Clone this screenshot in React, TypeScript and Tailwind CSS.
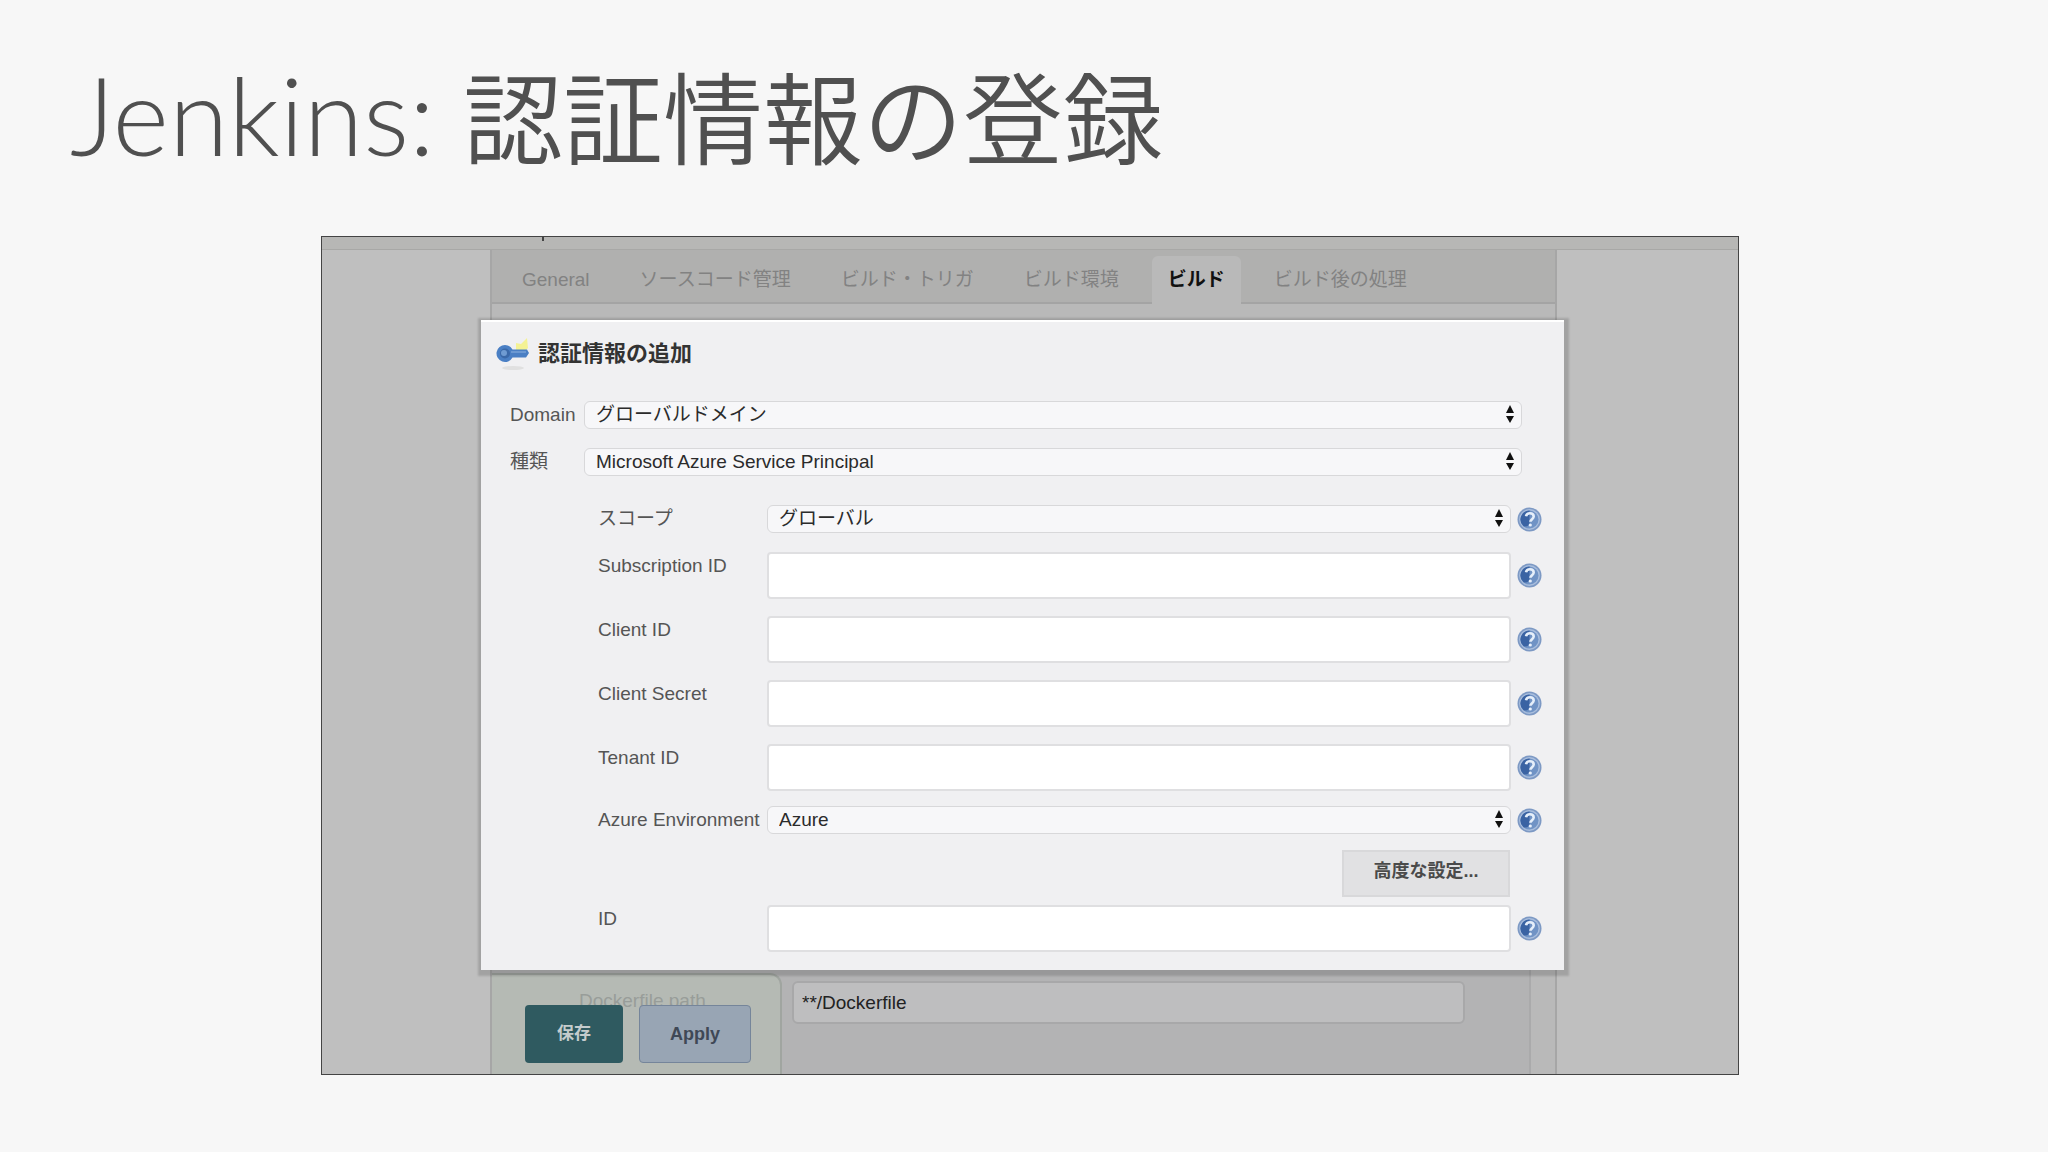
import { useState } from "react";
import type { ReactNode } from "react";
import { clsx } from "clsx";

const FONT = "font-['Liberation_Sans','Noto_Sans_CJK_JP',sans-serif]";

const TABS = [
  { id: "general", label: "General" },
  { id: "scm", label: "ソースコード管理" },
  { id: "trigger", label: "ビルド・トリガ" },
  { id: "env", label: "ビルド環境" },
  { id: "build", label: "ビルド" },
  { id: "post", label: "ビルド後の処理" },
];

const TEXT_FIELDS = [
  { id: "subscription", label: "Subscription ID", type: "text" },
  { id: "client", label: "Client ID", type: "text" },
  { id: "secret", label: "Client Secret", type: "password" },
  { id: "tenant", label: "Tenant ID", type: "text" },
];

function KeyIcon() {
  return (
    <svg width="34" height="36" viewBox="0 0 34 36" className="shrink-0" aria-hidden="true">
      <ellipse cx="17" cy="33" rx="11" ry="2" fill="#e0e0e0" />
      <path d="M20 8l5 1 6-6 1 10-4 4H20z" fill="#f4f294" />
      <path
        d="M9 10a8.500 8.500 0 0 1 7.500 4.500H31l2 3.500-3 4.500H16.500A8.500 8.500 0 1 1 9 10z"
        fill="#4a7fc4"
      />
      <path d="M15 17h15" stroke="#6b98d2" strokeWidth="2" />
      <circle cx="9" cy="18.500" r="5" fill="#3a68a8" />
      <circle cx="8" cy="18" r="3" fill="#6f9bd2" />
    </svg>
  );
}

function HelpIcon() {
  return (
    <svg width="25" height="25" viewBox="0 0 25 25" aria-hidden="true">
      <circle cx="12.5" cy="12.5" r="12" fill="#7d99c4" />
      <circle cx="12.5" cy="12.5" r="10.4" fill="#a9bedd" />
      <circle cx="12.5" cy="12.5" r="9" fill="#7093c5" />
      <path d="M12.5 3.5a9 9 0 0 0-6 15.700c4 1 6-1 6-4z" fill="#3a63a3" />
      <path
        d="M9 9.300c.4-2 2-3 3.900-3 2.200 0 3.800 1.200 3.800 3.200 0 2.600-3.300 2.700-3.300 5.300"
        fill="none"
        stroke="#e6effa"
        strokeWidth="2.600"
      />
      <circle cx="13.300" cy="18" r="1.600" fill="#e6effa" />
    </svg>
  );
}

function HelpButton({ label }: { label: string }) {
  return (
    <button type="button" aria-label={`${label} のヘルプ`} className="rounded-full">
      <HelpIcon />
    </button>
  );
}

function Select({ id, options }: { id: string; options: string[] }) {
  return (
    <div className="relative">
      <select
        id={id}
        className="block h-7 w-full appearance-none rounded-md border border-[#d8d8da] bg-[#f7f7f9] pl-[11px] pr-8 text-[19px] leading-6 text-[#2b2b2b]"
      >
        {options.map((option) => (
          <option key={option}>{option}</option>
        ))}
      </select>
      <svg
        width="8"
        height="18"
        viewBox="0 0 8 18"
        className="pointer-events-none absolute right-2 top-1"
        aria-hidden="true"
      >
        <path d="M4 0l4 8H0zM4 18l4-7H0z" fill="#111" />
      </svg>
    </div>
  );
}

function Field({
  id,
  label,
  center,
  children,
}: {
  id: string;
  label: string;
  center?: boolean;
  children: ReactNode;
}) {
  return (
    <div className="grid grid-cols-[163px_1fr_25px] gap-x-1.5">
      <label htmlFor={id} className="whitespace-nowrap leading-7">
        {label}
      </label>
      {children}
      <div className={clsx("flex", center ? "items-center" : "items-start pt-0.5")}>
        <HelpButton label={label} />
      </div>
    </div>
  );
}

function TextInput({ id, type = "text" }: { id: string; type?: string }) {
  return (
    <input
      id={id}
      type={type}
      className="h-[47px] w-full rounded-sm border-2 border-[#dfdfe1] bg-white px-2 text-[19px]"
    />
  );
}

function ConfigPage() {
  const [active, setActive] = useState("build");

  return (
    <div className="flex flex-col [grid-area:1/1]">
      <div className="relative h-[13px] border-b border-[#a8a8a6] bg-[#b7b7b5]">
        <span className="absolute left-[220px] top-0 h-1 w-0.5 bg-[#444]" />
      </div>
      <div className="flex flex-1 bg-[#bfbfbf]">
        <div className="w-[168px] shrink-0" />
        <div className="relative flex flex-1 flex-col border-x-2 border-[#a6a6a6] bg-[#b9b9b9]">
          <nav className="flex h-[54px] items-end border-b-2 border-[#a4a4a4] bg-[#b0b0af] pl-[5px]">
            {TABS.map((tab) => (
              <button
                key={tab.id}
                type="button"
                onClick={() => setActive(tab.id)}
                className={clsx(
                  "-mb-0.5 h-12 whitespace-nowrap text-[19px]",
                  active === tab.id
                    ? "mx-2 rounded-t-md bg-[#b9b9b9] px-4 font-bold text-[#111]"
                    : "px-[25px] text-[#828282]"
                )}
              >
                {tab.label}
              </button>
            ))}
          </nav>
          <div className="mr-6 mt-auto border-r-2 border-[#aaaaab] bg-[#b3b3b4] pb-[50px] pl-[300px] pr-16 pt-10">
            <input
              id="dockerfile"
              aria-label="Dockerfile path"
              defaultValue="**/Dockerfile"
              className="block h-[43px] w-full rounded-md border-2 border-[#a8a8a9] bg-[#bebebf] px-2 text-[19px] text-[#222]"
            />
          </div>

          {/* sticky save bar */}
          <div className="absolute bottom-0 left-0 h-[101px] w-[290px] rounded-tr-xl border-r-2 border-t-2 border-[#a0a5a0] bg-[#b5bab4] pl-[33px] pt-3">
            <label htmlFor="dockerfile" className="block pl-[54px] text-[19px] leading-7 text-[#989d99]">
              Dockerfile path
            </label>
            <div className="relative -mt-2.5 flex gap-4">
              <button
                type="button"
                className="h-[58px] w-[98px] rounded bg-[#2f5a60] text-[17px] font-bold text-[#c5cccd]"
              >
                保存
              </button>
              <button
                type="button"
                className="h-[58px] w-[112px] rounded border border-[#75859a] bg-[#98a5b4] text-[18px] font-bold text-[#3f4856]"
              >
                Apply
              </button>
            </div>
          </div>
        </div>
        <div className="w-[181px] shrink-0" />
      </div>
    </div>
  );
}

function CredentialDialog() {
  return (
    <div className="z-10 pb-[104px] pl-[159px] pr-[174px] pt-[83px] [grid-area:1/1]">
      <form
        role="dialog"
        aria-labelledby="dialog-title"
        onSubmit={(e) => e.preventDefault()}
        className="border-t-2 border-white bg-[#f0f0f2] pb-[18px] pl-[15px] pr-[22px] pt-[13px] text-[19px] text-[#555] shadow-[1px_2px_2px_4px_rgba(0,0,0,0.15)]"
      >
        <div className="flex h-9 items-center gap-2">
          <KeyIcon />
          <h2 id="dialog-title" className="text-[22px] font-bold text-[#333]">
            認証情報の追加
          </h2>
        </div>

        <div className="mt-[30px] grid grid-cols-[68px_1fr] gap-x-1.5 gap-y-[19px] pl-3.5 pr-5">
          <label htmlFor="domain" className="leading-7">
            Domain
          </label>
          <Select id="domain" options={["グローバルドメイン"]} />
          <label htmlFor="kind" className="leading-7">
            種類
          </label>
          <Select id="kind" options={["Microsoft Azure Service Principal"]} />
        </div>

        <div className="mt-[29px] pl-[102px]">
          <Field id="scope" label="スコープ">
            <Select id="scope" options={["グローバル"]} />
          </Field>
          <div className="mb-[15px] mt-[19px] flex flex-col gap-[17px]">
            {TEXT_FIELDS.map((field) => (
              <Field key={field.id} id={field.id} label={field.label} center>
                <TextInput id={field.id} type={field.type} />
              </Field>
            ))}
          </div>
          <Field id="azure-env" label="Azure Environment">
            <Select id="azure-env" options={["Azure"]} />
          </Field>
          <div className="mb-2 mt-4 flex justify-end pr-8">
            <button
              type="button"
              className="h-[47px] w-[168px] border-2 border-[#d8d8da] bg-[#e1e1e3] pb-1 text-[18px] font-bold text-[#4a4a4a]"
            >
              高度な設定...
            </button>
          </div>
          <Field id="cred-id" label="ID" center>
            <TextInput id="cred-id" />
          </Field>
        </div>
      </form>
    </div>
  );
}

export default function App() {
  return (
    <main className={clsx("min-h-screen bg-[#f7f7f7] pb-[78px] pt-[50px]", FONT)}>
      <h1 className="flex h-32 items-center gap-7 whitespace-nowrap pl-[70px] text-[#505050]">
        <span className="font-['Lato',sans-serif] text-[108px] font-light leading-none">Jenkins:</span>
        <span className="font-['Noto_Sans_CJK_JP',sans-serif] text-[100px] font-[350] leading-none">認証情報の登録</span>
      </h1>
      <section className="ml-[321px] mr-[309px] mt-[58px] grid overflow-hidden border border-[#444]">
        <ConfigPage />
        <CredentialDialog />
      </section>
    </main>
  );
}
